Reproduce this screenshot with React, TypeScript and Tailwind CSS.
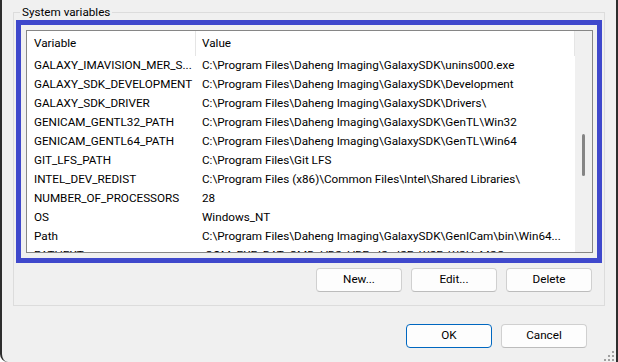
const rows: [string, string][] = [
  ['GALAXY_IMAVISION_MER_S...', 'C:\\Program Files\\Daheng Imaging\\GalaxySDK\\unins000.exe'],
  ['GALAXY_SDK_DEVELOPMENT', 'C:\\Program Files\\Daheng Imaging\\GalaxySDK\\Development'],
  ['GALAXY_SDK_DRIVER', 'C:\\Program Files\\Daheng Imaging\\GalaxySDK\\Drivers\\'],
  ['GENICAM_GENTL32_PATH', 'C:\\Program Files\\Daheng Imaging\\GalaxySDK\\GenTL\\Win32'],
  ['GENICAM_GENTL64_PATH', 'C:\\Program Files\\Daheng Imaging\\GalaxySDK\\GenTL\\Win64'],
  ['GIT_LFS_PATH', 'C:\\Program Files\\Git LFS'],
  ['INTEL_DEV_REDIST', 'C:\\Program Files (x86)\\Common Files\\Intel\\Shared Libraries\\'],
  ['NUMBER_OF_PROCESSORS', '28'],
  ['OS', 'Windows_NT'],
  ['Path', 'C:\\Program Files\\Daheng Imaging\\GalaxySDK\\GenICam\\bin\\Win64...'],
  ['PATHEXT', '.COM;.EXE;.BAT;.CMD;.VBS;.VBE;.JS;.JSE;.WSF;.WSH;.MSC'],
];

function Btn({ label, primary }: { label: string; primary?: boolean }) {
  return (
    <button
      className={
        primary
          ? 'w-[86px] h-[24px] rounded-[4px] bg-[#fdfdfd] border border-[#0067c0] leading-none'
          : 'w-[86px] h-[24px] rounded-[4px] bg-[#fdfdfd] border border-[#d0d0d0] border-b-[#bcbcbc] leading-none'
      }
    >
      {label}
    </button>
  );
}

export default function App() {
  return (
    <div className="w-[618px] h-[362px] bg-[#f0f0f0] border-x-2 border-[#2e2e2e] rounded-bl-[8px] relative overflow-hidden text-[11.7px] text-black font-['Roboto','Noto_Sans',sans-serif]">
      <fieldset className="ml-[11px] mt-[4px] w-[592px] min-w-0 border border-[#dcdcdc] px-[2px] pb-[13px]">
        <legend className="ml-[4px] px-[2px] leading-[16px]">System variables</legend>

        <div className="w-[586px] h-[243px] border-[5px] border-[#3f48cc] pl-[5px] pt-[5px]">
          <div className="w-[567px] h-[223px] border border-[#868686] bg-white flex overflow-hidden">
            <div className="flex-1 flex flex-col overflow-hidden">
              <div className="h-[25px] flex items-center shrink-0">
                <div className="w-[169px] h-full pl-[7px] flex items-center border-r border-[#e5e5e5]">Variable</div>
                <div className="flex-1 h-full pl-[6px] flex items-center border-r border-[#e5e5e5]">Value</div>
              </div>
              {rows.map(([name, value]) => (
                <div key={name} className="h-[19px] flex items-center shrink-0 whitespace-nowrap">
                  <div className="w-[169px] pl-[7px] overflow-hidden">{name}</div>
                  <div className="flex-1 pl-[6px] overflow-hidden">{value}</div>
                </div>
              ))}
            </div>
            <div className="w-[17px] bg-[#f0f0f0] shrink-0 flex flex-col items-center">
              <div className="mt-[103px] w-[3px] h-[42px] rounded-full bg-[#858585]" />
            </div>
          </div>
        </div>

        <div className="mt-[5px] pr-[10px] flex justify-end gap-[9px]">
          <Btn label="New..." />
          <Btn label="Edit..." />
          <Btn label="Delete" />
        </div>
      </fieldset>

      <div className="mt-[18px] flex justify-end gap-[9px] pr-[29px]">
        <Btn label="OK" primary />
        <Btn label="Cancel" />
      </div>

      <svg className="absolute right-[2px] bottom-[1px]" width="10" height="10" viewBox="0 0 10 10">
        <rect x="8" y="0" width="2" height="2" fill="#a0a0a0" />
        <rect x="4" y="4" width="2" height="2" fill="#a0a0a0" />
        <rect x="8" y="4" width="2" height="2" fill="#a0a0a0" />
        <rect x="0" y="8" width="2" height="2" fill="#a0a0a0" />
        <rect x="4" y="8" width="2" height="2" fill="#a0a0a0" />
        <rect x="8" y="8" width="2" height="2" fill="#a0a0a0" />
      </svg>
    </div>
  );
}
